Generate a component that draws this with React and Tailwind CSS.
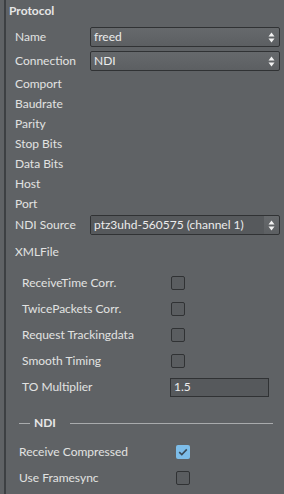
import React from 'react';

const font = { fontFamily: '"Segoe UI", Lato, "Noto Sans", sans-serif' };

const Arrows = () => (
    <svg width="7" height="11" viewBox="0 0 7 11" className="shrink-0">
        <path d="M3.5 0.5 L6.5 4.5 L0.5 4.5 Z" fill="#f2f2f2" />
        <path d="M3.5 10.5 L6.5 6.5 L0.5 6.5 Z" fill="#f2f2f2" />
    </svg>
);

const Select = ({ value, combo }) => (
    <div className="w-[190px] h-[20px] rounded-[2px] border border-[#303234] bg-gradient-to-b from-[#66696c] to-[#5c5f62] flex items-center overflow-hidden">
        <span className={`flex-1 h-full flex items-center pl-[3px] text-[#ececec] ${combo ? 'bg-[#56595c]' : ''}`}>{value}</span>
        <span className="w-[15px] h-full flex items-center justify-center">
            <Arrows />
        </span>
    </div>
);

const Label = ({ children }) => (
    <div className="h-[20px] flex items-center pl-[9px]">{children}</div>
);

const Check = ({ checked }) => (
    checked ? (
        <div className="w-[14px] h-[14px] rounded-[2px] bg-[#7dbde9] flex items-center justify-center">
            <svg width="10" height="8" viewBox="0 0 10 8">
                <path d="M1.2 4.2 L3.8 6.6 L8.8 1.4" stroke="#3a4a58" strokeWidth="1.6" fill="none" />
            </svg>
        </div>
    ) : (
        <div className="w-[14px] h-[14px] rounded-[2px] border border-[#303234] bg-[#5a5d60]" />
    )
);

const CheckRow = ({ label, checked }) => (
    <div className="h-[26px] flex items-center pl-[15px]">
        <span className="w-[150px] pl-[1px]">{label}</span>
        <Check checked={checked} />
    </div>
);

const NdiRow = ({ label, checked }) => (
    <div className="h-[26px] flex items-center pl-[13px]">
        <span className="w-[157px]">{label}</span>
        <Check checked={checked} />
    </div>
);

export default function App() {
    return (
        <div className="w-[284px] h-[494px] bg-[#5f6265] pl-[4px] overflow-hidden text-[12px] text-[#e2e2e2]" style={font}>
            <div className="h-full border-l-2 border-[#3d4043] flex flex-col">
                <div className="h-[22px] flex items-center pl-[3px] font-bold text-[#e6e6e6]">Protocol</div>

                <div className="mt-[5px] h-[20px] flex items-center pl-[9px]">
                    <span className="w-[75px]">Name</span>
                    <Select value="freed" />
                </div>
                <div className="mt-[4px] h-[20px] flex items-center pl-[9px]">
                    <span className="w-[75px]">Connection</span>
                    <Select value="NDI" />
                </div>

                <div className="mt-[3px]">
                    <Label>Comport</Label>
                    <Label>Baudrate</Label>
                    <Label>Parity</Label>
                    <Label>Stop Bits</Label>
                    <Label>Data Bits</Label>
                    <Label>Host</Label>
                    <Label>Port</Label>
                </div>

                <div className="mt-[1px] h-[20px] flex items-center pl-[9px]">
                    <span className="w-[75px]">NDI Source</span>
                    <Select value="ptz3uhd-560575 (channel 1)" combo />
                </div>

                <div className="mt-[7px]">
                    <Label>XMLFile</Label>
                </div>

                <div className="mt-[8px]">
                    <CheckRow label="ReceiveTime Corr." />
                    <CheckRow label="TwicePackets Corr." />
                    <CheckRow label="Request Trackingdata" />
                    <CheckRow label="Smooth Timing" />
                    <div className="h-[26px] flex items-center pl-[15px]">
                        <span className="w-[149px] pl-[1px]">TO Multiplier</span>
                        <div className="w-[99px] h-[19px] border border-[#303234] bg-[#56595c] flex items-center pl-[3px] text-[#ececec]">1.5</div>
                    </div>
                </div>

                <div className="mt-[10px] h-[26px] flex items-center pl-[13px] pr-[11px]">
                    <div className="w-[11px] h-px bg-[#a9abad]" />
                    <span className="ml-[4px] mr-[14px] font-bold text-[#e6e6e6]">NDI</span>
                    <div className="flex-1 h-px bg-[#a9abad]" />
                </div>

                <div className="mt-[3px]">
                    <NdiRow label="Receive Compressed" checked />
                    <NdiRow label="Use Framesync" />
                </div>
            </div>
        </div>
    );
}
